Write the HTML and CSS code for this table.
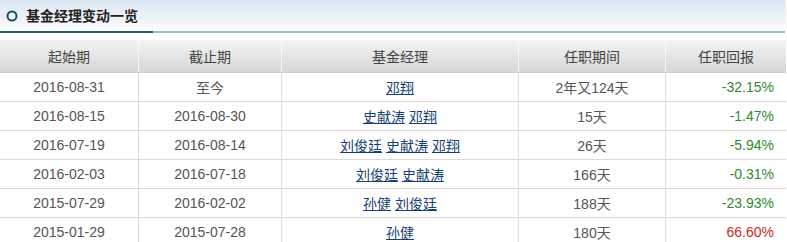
FILE: index.html
```html
<!DOCTYPE html>
<html lang="zh">
<head>
<meta charset="utf-8">
<title>基金经理变动一览</title>
<link rel="stylesheet" href="styles.css">
</head>
<body>
<div class="panel">
  <div class="title-bar">
    <svg class="title-icon" width="12" height="12" viewBox="0 0 12 12"><circle cx="6" cy="6" r="4.5" fill="none" stroke="#1f4a66" stroke-width="2"/></svg>
    <h2 class="title">基金经理变动一览</h2>
  </div>
  <div class="rule"><span class="rule-dark"></span><span class="rule-light"></span></div>
  <table class="grid">
    <thead>
      <tr>
        <th class="c1">起始期</th>
        <th class="c2">截止期</th>
        <th class="c3">基金经理</th>
        <th class="c4">任职期间</th>
        <th class="c5">任职回报</th>
      </tr>
    </thead>
    <tbody>
      <tr><td>2016-08-31</td><td>至今</td><td><a href="#">邓翔</a></td><td>2年又124天</td><td class="ret down">-32.15%</td></tr>
      <tr><td>2016-08-15</td><td>2016-08-30</td><td><a href="#">史献涛</a> <a href="#">邓翔</a></td><td>15天</td><td class="ret down">-1.47%</td></tr>
      <tr><td>2016-07-19</td><td>2016-08-14</td><td><a href="#">刘俊廷</a> <a href="#">史献涛</a> <a href="#">邓翔</a></td><td>26天</td><td class="ret down">-5.94%</td></tr>
      <tr><td>2016-02-03</td><td>2016-07-18</td><td><a href="#">刘俊廷</a> <a href="#">史献涛</a></td><td>166天</td><td class="ret down">-0.31%</td></tr>
      <tr><td>2015-07-29</td><td>2016-02-02</td><td><a href="#">孙健</a> <a href="#">刘俊廷</a></td><td>188天</td><td class="ret down">-23.93%</td></tr>
      <tr><td>2015-01-29</td><td>2015-07-28</td><td><a href="#">孙健</a></td><td>180天</td><td class="ret up">66.60%</td></tr>
    </tbody>
  </table>
</div>
</body>
</html>
```
FILE: styles.css
```css
html, body {
  margin: 0;
  padding: 0;
  background: #fff;
}
body {
  font-family: "Liberation Sans", Arial, "Noto Sans CJK SC", sans-serif;
  font-size: 14px;
  color: #555;
}
.panel {
  width: 786px;
}
.title-bar {
  height: 31px;
  display: flex;
  align-items: center;
  gap: 8px;
  padding-left: 6px;
  box-sizing: border-box;
  background: linear-gradient(to bottom, #dbe7f3 0%, #eef3f8 60%, #fdfdfd 100%);
}
.title-icon {
  display: block;
  margin-top: 0;
}
.title {
  margin: 0;
  font-size: 14px;
  font-weight: bold;
  color: #222;
  font-family: "Noto Sans CJK SC", sans-serif;
  line-height: 1;
  position: relative;
  top: -1px;
}
.rule {
  display: flex;
  height: 2px;
  width: 785px;
}
.rule-dark {
  width: 153px;
  background: #2c5a6d;
}
.rule-light {
  flex: 1;
  background: #9cbdca;
}
.grid {
  margin-top: 7px;
  width: 786px;
  border-collapse: collapse;
  table-layout: fixed;
}
.grid th {
  height: 32px;
  padding: 0;
  font-weight: normal;
  color: #444;
  font-family: "Noto Sans CJK SC", sans-serif;
  font-size: 14px;
  background: linear-gradient(to bottom, #f3f3f3 0%, #e2e2e2 60%, #d5d5d5 100%);
  border-left: 1px solid #f8f8f8;
  border-bottom: 1px solid #cfcfcf;
  text-align: center;
}
.grid th:first-child {
  border-left: none;
}
.c1 { width: 138px; }
.c2 { width: 142px; }
.c3 { width: 236px; }
.c4 { width: 146px; }
.c5 { width: auto; }
.grid td {
  height: 28px;
  padding: 0;
  text-align: center;
  border-bottom: 1px solid #dadada;
  border-left: 1px solid #dadada;
  color: #555;
  font-family: "Liberation Sans", Arial, "Noto Sans CJK SC", sans-serif;
}
.grid td:first-child {
  border-left: none;
}
.grid a {
  color: #183f74;
  text-decoration: underline;
}
.grid td.ret {
  text-align: right;
  padding-right: 12px;
}
.down { color: #2f8a2f !important; }
.up { color: #d21e1e !important; }
```
